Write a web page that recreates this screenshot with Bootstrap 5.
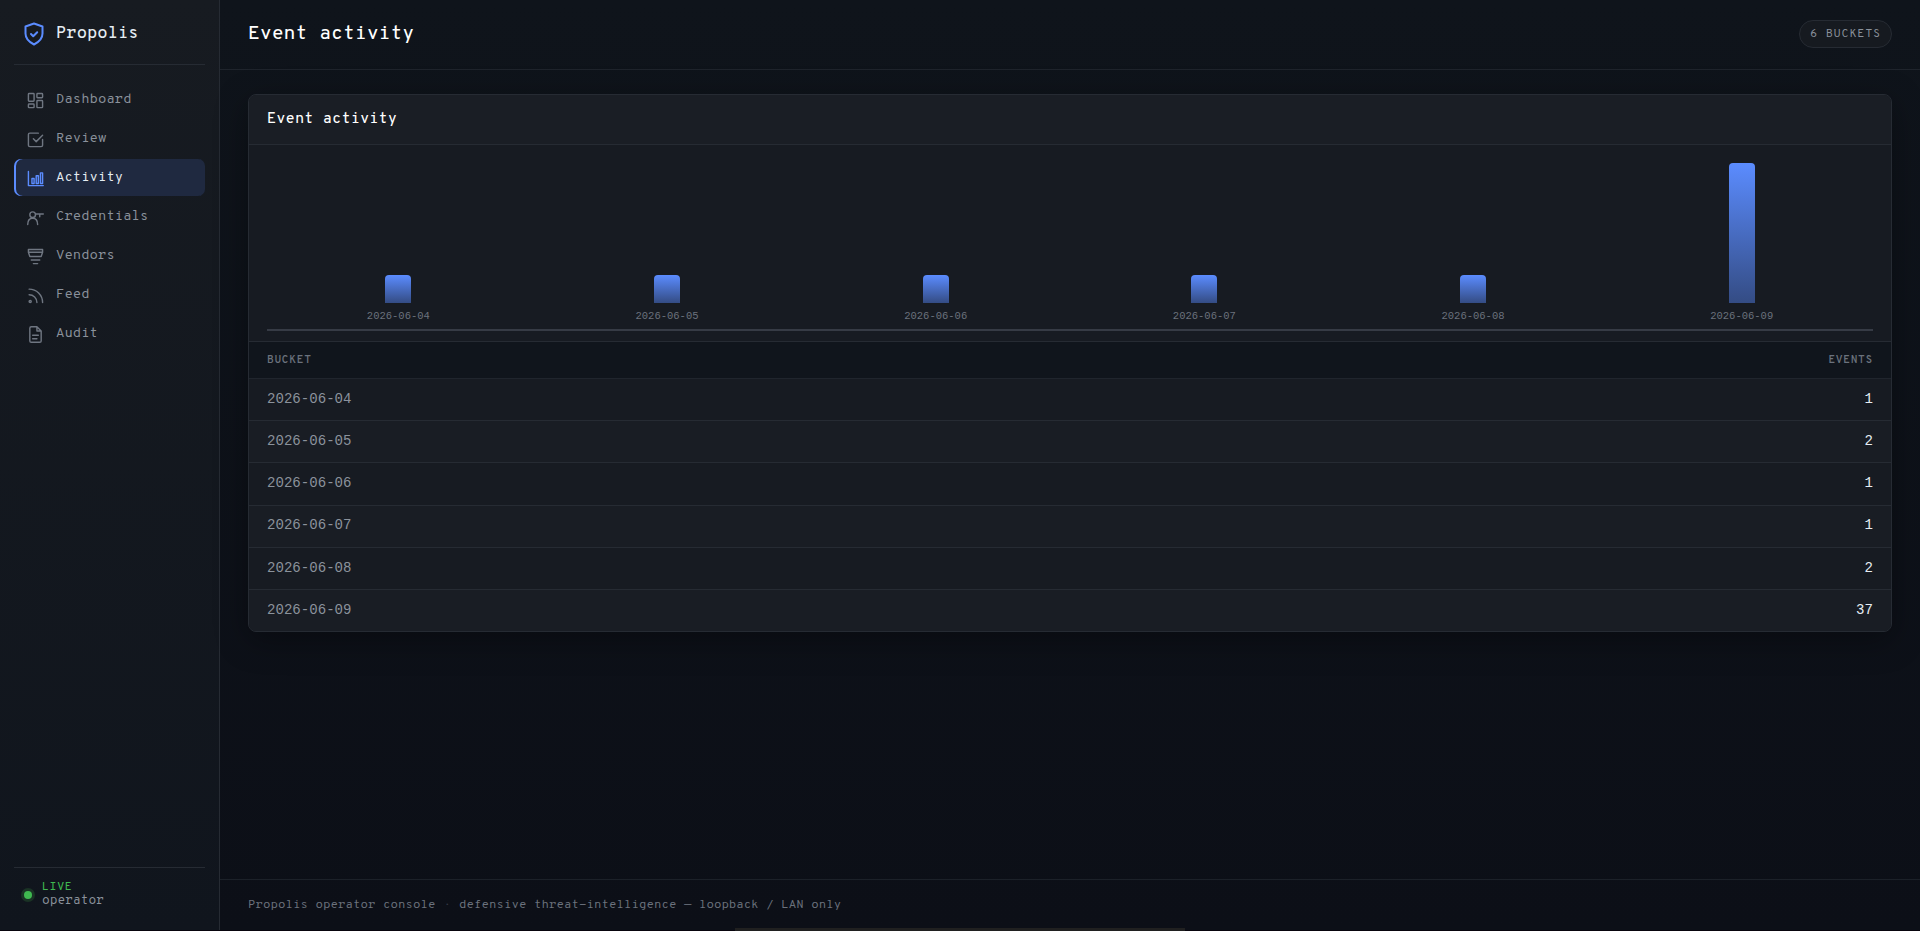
<!DOCTYPE html>
<html lang="en" data-bs-theme="dark">
<head>
<meta charset="utf-8">
<meta name="viewport" content="width=device-width, initial-scale=1">
<title>Event activity - Propolis</title>
<link href="https://cdn.jsdelivr.net/npm/bootstrap@5.3.0/dist/css/bootstrap.min.css" rel="stylesheet">
<style>
:root{--line:#262b33;--ink:#e6edf3;--dim:#8b929c;--faint:#6b727d;--accent:#5b8cff}
body{font-family:"Overpass Mono","Liberation Mono",monospace;font-size:13.6px;line-height:1.5;color:var(--ink);background:#08050d;overflow:hidden}
.shell{height:930px;background:linear-gradient(180deg,#0f141b,#0c0f17)}
.side{width:220px;padding:0 14px;background:linear-gradient(180deg,#171b21,#10151d);border-right:1px solid var(--line)}
.brand{height:65px;padding:3px 0 0 10px;gap:12px;font-size:16.8px;font-weight:500;border-bottom:1px solid var(--line);margin-bottom:16px}
.brand svg{width:20px;height:24px;color:var(--accent)}
.side .nav{gap:2px}
.side .nav-link{height:37px;padding:2px 12px 0 13px;gap:12px;color:var(--dim);border-radius:7px;font-size:13.65px}
.side .nav-link svg{width:17px;height:17px;color:#6f7681}
.side .nav-link.active{background:#1f2940;color:var(--ink);box-shadow:inset 2px 0 var(--accent)}
.side .nav-link.active svg{color:var(--accent)}
svg{fill:none;stroke:currentColor;stroke-width:2;stroke-linecap:round;stroke-linejoin:round;flex:none}
.who{height:63px;border-top:1px solid var(--line);padding:12px 0 0 10px;gap:10px;line-height:14px;font-size:12.6px;color:var(--dim)}
.dot{width:8px;height:8px;border-radius:50%;background:#3fb950;box-shadow:0 0 0 3px #1a3325;margin-top:11px}
.live{font-size:11.2px;color:#3fb950;letter-spacing:.06em;font-weight:500}
.topbar{height:70px;padding:0 28px;border-bottom:1px solid #1f242c}
h1{font-size:19.6px;font-weight:500;letter-spacing:-.01em;margin:0;padding-top:1px}
h2{font-size:15.1px;font-weight:500;margin:0;padding-top:2px}
.pill{height:28px;padding:2px 10px 0 10px;margin-bottom:1px;font-size:11.7px;letter-spacing:.06em;color:var(--dim);background:#161a20;border:1px solid var(--line)}
.panel{margin:24px 28px 0;border:1px solid var(--line);border-radius:8px;background:#171b22;overflow:hidden;box-shadow:0 8px 32px rgba(0,0,0,.35)}
.panel-top{height:50px;padding:0 18px;background:#1a1e25;border-bottom:1px solid var(--line)}
.chart{height:168px;margin:18px 18px 10px;border-bottom:2px solid #363b45;gap:6px;padding-bottom:7px}
.slot{height:161px}
.bar{width:26px;border-radius:4px 4px 0 0;background:linear-gradient(180deg,#5b8cff,#344c84)}
.tick{font:10.5px/15px "Liberation Mono",monospace;color:var(--faint);margin-top:6px}
.grid-table{width:100%;margin:0}
.grid-table th{height:37px;padding:0 18px;font-size:11px;font-weight:600;letter-spacing:.06em;color:var(--faint);background:#10151c;border-top:1px solid var(--line);border-bottom:1px solid #20252d}
.grid-table td{height:42.2px;padding:0 18px 1.5px;font:14.08px/20px "Liberation Mono",monospace;color:var(--dim);border-bottom:1px solid var(--line)}
.grid-table td:last-child{color:var(--ink)}
.grid-table tr:nth-child(even) td{background:#191d24}
.grid-table tr:last-child td{height:42px;padding-bottom:1px;border-bottom:0}
.foot{height:51px;padding:1px 28px 0;border-top:1px solid #1c2129;font-size:12.18px;color:var(--faint);gap:8px}
.foot i{font-style:normal;color:#343a44}
.scroll-thumb{width:450px;height:3px;left:735px;bottom:0;background:#202020}
</style>
</head>
<body>
<div class="shell d-flex">
<aside class="side d-flex flex-column">
<div class="brand d-flex align-items-center"><svg viewBox="0 0 20 24"><path d="M10 1.500l8.500 3v7c0 5-3.500 8.500-8.500 11-5-2.500-8.500-6-8.500-11v-7zM7 12l2.200 2.200 4-4"/></svg>Propolis</div>
<nav class="nav flex-column">
<a class="nav-link d-flex align-items-center"><svg viewBox="0 0 24 24"><rect x="2" y="2" width="8" height="11" rx="1"/><rect x="14" y="2" width="8" height="6" rx="1"/><rect x="14" y="12" width="8" height="10" rx="1"/><rect x="2" y="17" width="8" height="5" rx="1"/></svg>Dashboard</a>
<a class="nav-link d-flex align-items-center"><svg viewBox="0 0 24 24"><path d="M9 11l4 4 9-9M22 12v8a2 2 0 0 1-2 2H4a2 2 0 0 1-2-2V5a2 2 0 0 1 2-2h12"/></svg>Review</a>
<a class="nav-link active d-flex align-items-center"><svg viewBox="0 0 24 24"><path d="M2 2v20h21M7 12h3v7H7zM13 8h3v11h-3zM19 4h3v15h-3z"/></svg>Activity</a>
<a class="nav-link d-flex align-items-center"><svg viewBox="0 0 24 24"><circle cx="8" cy="8" r="4"/><path d="M1 22c0-6 3-9 7-9s7 3 7 9M12 7h11M18 7v4"/></svg>Credentials</a>
<a class="nav-link d-flex align-items-center"><svg viewBox="0 0 24 24"><path d="M2 2h20v4H2zM2 6l2 6h16l2-6M6 17h12M9 22h6"/></svg>Vendors</a>
<a class="nav-link d-flex align-items-center"><svg viewBox="0 0 24 24"><path d="M3 11a11 11 0 0 1 11 11M3 3a19 19 0 0 1 19 19"/><circle cx="4.500" cy="20.500" r="1.500"/></svg>Feed</a>
<a class="nav-link d-flex align-items-center"><svg viewBox="0 0 24 24"><path d="M14 1H6a2 2 0 0 0-2 2v18a2 2 0 0 0 2 2h12a2 2 0 0 0 2-2V7zM14 1v6h6M8 13h8M8 18h6"/></svg>Audit</a>
</nav>
<div class="who d-flex mt-auto"><span class="dot"></span><div><div class="live">LIVE</div>operator</div></div>
</aside>
<main class="d-flex flex-column flex-fill">
<header class="topbar d-flex align-items-center justify-content-between"><h1>Event activity</h1><span class="pill rounded-pill d-flex align-items-center">6 BUCKETS</span></header>
<section class="panel">
<div class="panel-top d-flex align-items-center"><h2>Event activity</h2></div>
<div class="chart d-flex" id="chart"></div>
<table class="grid-table"><thead><tr><th>BUCKET</th><th class="text-end">EVENTS</th></tr></thead><tbody id="rows"></tbody></table>
</section>
<footer class="foot mt-auto d-flex align-items-center"><span>Propolis operator console</span><i>·</i><span>defensive threat-intelligence — loopback / LAN only</span></footer>
</main>
</div>
<div class="scroll-thumb position-fixed"></div>
<script>
const data=[['2026-06-04',1,28],['2026-06-05',2,28],['2026-06-06',1,28],['2026-06-07',1,28],['2026-06-08',2,28],['2026-06-09',37,140]];
document.getElementById('chart').innerHTML=data.map(d=>`<div class="slot flex-fill d-flex flex-column align-items-center justify-content-end"><div class="bar" style="height:${d[2]}px"></div><span class="tick">${d[0]}</span></div>`).join('');
document.getElementById('rows').innerHTML=data.map(d=>`<tr><td>${d[0]}</td><td class="text-end">${d[1]}</td></tr>`).join('');
</script>
<script src="https://cdn.jsdelivr.net/npm/bootstrap@5.3.0/dist/js/bootstrap.bundle.min.js"></script>
</body>
</html>
